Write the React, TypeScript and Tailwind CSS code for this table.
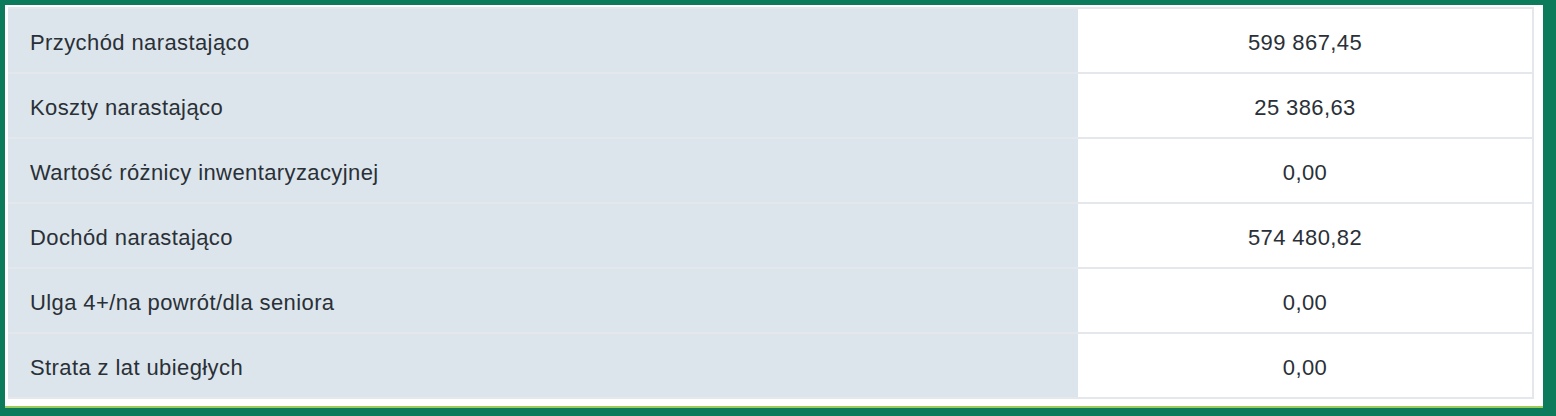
import React from 'react';

const ROWS = [
  { label: 'Przychód narastająco', value: '599 867,45' },
  { label: 'Koszty narastająco', value: '25 386,63' },
  { label: 'Wartość różnicy inwentaryzacyjnej', value: '0,00' },
  { label: 'Dochód narastająco', value: '574 480,82' },
  { label: 'Ulga 4+/na powrót/dla seniora', value: '0,00' },
  { label: 'Strata z lat ubiegłych', value: '0,00' },
];

export default function App() {
  return (
    <div className="w-[1556px] h-[416px] bg-[#0b7b5c] pt-[5px] pl-[5px] pr-[13px] pb-[8px] font-['Liberation_Sans',Arial,sans-serif]">
      <div className="h-full bg-white border-b-2 border-[#9ccc55] pt-[2px] pl-[3px] pr-[9px] pb-[6px]">
        <div className="border-t-2 border-[#e4e8ec]">
          {ROWS.map((row) => (
            <div key={row.label} className="flex h-[65px] border-b-2 border-[#e4e8ec]">
              <div className="w-[1070px] bg-[#dce5eb] flex items-center pl-[22px] pt-[4px] text-[22px] tracking-[0.4px] text-[#2a3037]">
                {row.label}
              </div>
              <div className="flex-1 flex items-center justify-center pt-[4px] text-[22px] tracking-[0.4px] text-[#2a3037] border-r-2 border-[#e4e8ec]">
                {row.value}
              </div>
            </div>
          ))}
        </div>
      </div>
    </div>
  );
}
